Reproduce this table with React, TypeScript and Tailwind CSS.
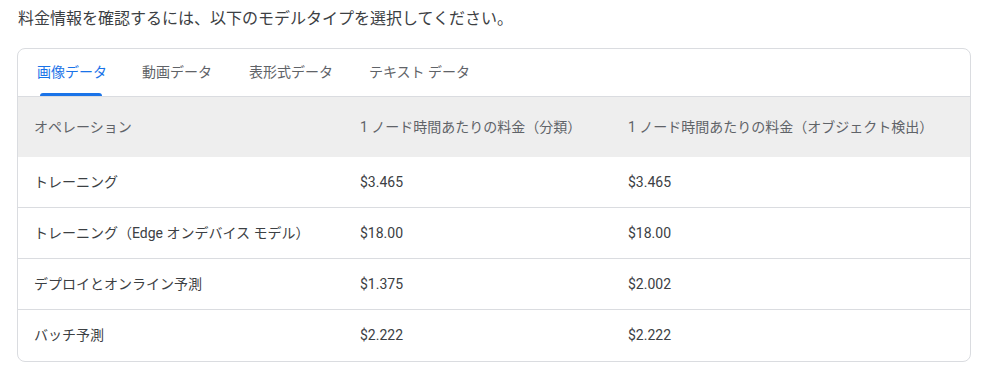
import React from "react";

const rows = [
  ["トレーニング", "$3.465", "$3.465"],
  ["トレーニング（Edge オンデバイス モデル）", "$18.00", "$18.00"],
  ["デプロイとオンライン予測", "$1.375", "$2.002"],
  ["バッチ予測", "$2.222", "$2.222"],
];

const tabs = [
  { label: "画像データ", w: "w-[105px]" },
  { label: "動画データ", w: "w-[107px]" },
  { label: "表形式データ", w: "w-[120px]" },
  { label: "テキスト データ", w: "w-[137px]" },
];

export default function App() {
  return (
    <div
      className="bg-white w-[1001px] h-[367px] overflow-hidden px-[17px] pt-[7px]"
      style={{ fontFamily: 'Roboto, "Noto Sans CJK JP", sans-serif' }}
    >
      <p className="text-[16px] leading-[24px] text-[#3c4043] pl-[1px]">
        料金情報を確認するには、以下のモデルタイプを選択してください。
      </p>
      <div className="mt-[17px] w-[954px] border border-[#dadce0] rounded-[8px] overflow-hidden">
        <div className="flex h-[48px] border-b border-[#dadce0]">
          {tabs.map((t, i) => (
            <div
              key={t.label}
              className={`relative ${t.w} pl-[19px] flex items-center whitespace-nowrap text-[14px] ${
                i === 0 ? "text-[#1a73e8]" : "text-[#5f6368]"
              }`}
            >
              {t.label}
              {i === 0 && (
                <div className="absolute bottom-0 left-[22px] w-[62px] h-[3px] rounded-t-[3px] bg-[#1a73e8]" />
              )}
            </div>
          ))}
        </div>
        <div className="grid grid-cols-[326px_268px_1fr] h-[60px] items-center bg-[#eeeeee] text-[14px] text-[#5f6368]">
          <div className="pl-[16px]">オペレーション</div>
          <div className="pl-[16px]">1 ノード時間あたりの料金（分類）</div>
          <div className="pl-[16px]">1 ノード時間あたりの料金（オブジェクト検出）</div>
        </div>
        {rows.map((r, i) => (
          <div
            key={i}
            className={`grid grid-cols-[326px_268px_1fr] h-[51px] items-center text-[14px] text-[#3c4043] ${
              i < rows.length - 1 ? "border-b border-[#dadce0]" : ""
            }`}
          >
            <div className="pl-[16px]">{r[0]}</div>
            <div className="pl-[16px]">{r[1]}</div>
            <div className="pl-[16px]">{r[2]}</div>
          </div>
        ))}
      </div>
    </div>
  );
}
